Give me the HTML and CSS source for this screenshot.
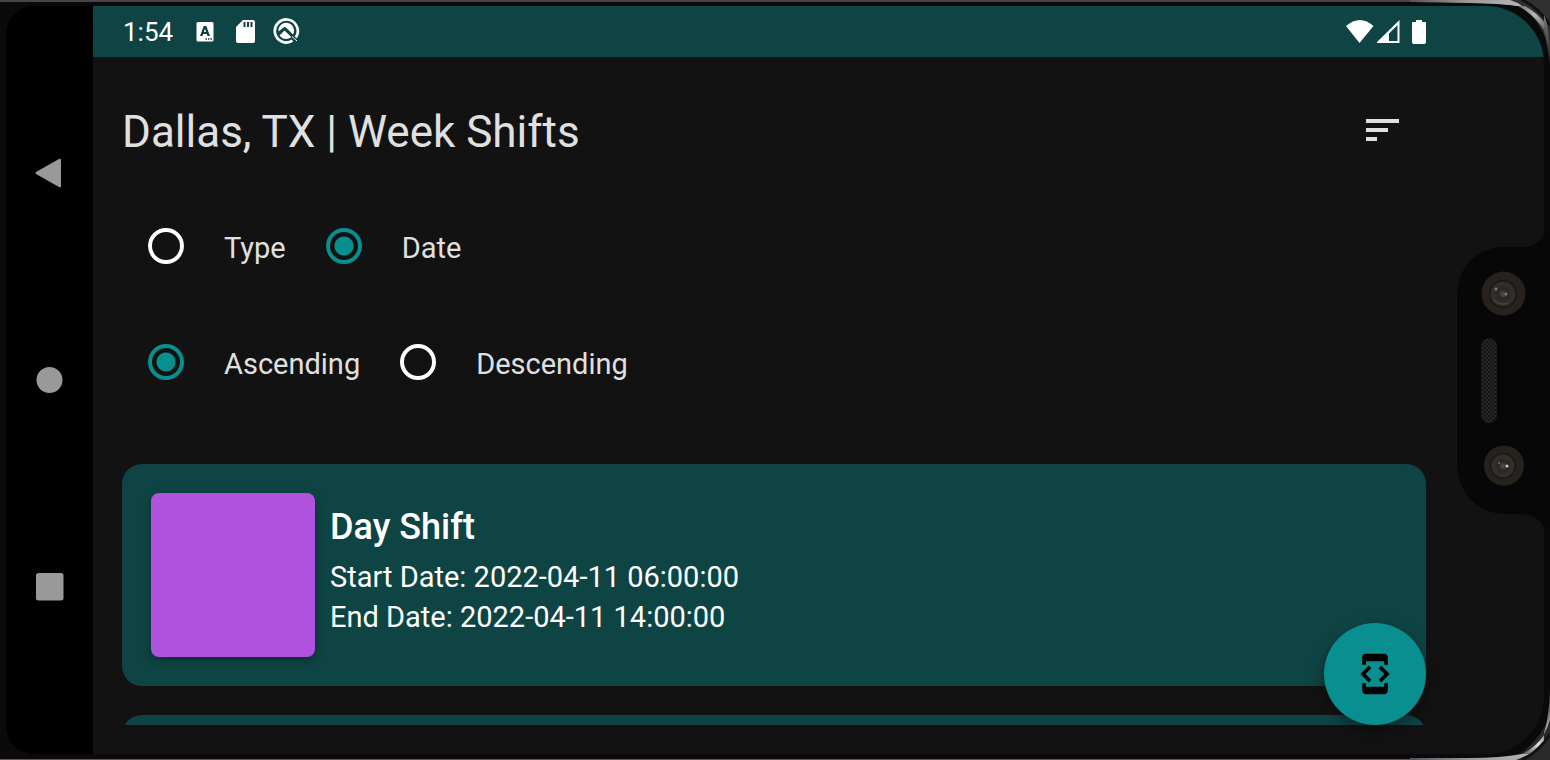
FILE: index.html
```html
<!DOCTYPE html>
<html lang="en">
<head>
<meta charset="utf-8">
<meta name="viewport" content="width=device-width, initial-scale=1">
<title>Dallas, TX | Week Shifts</title>
<link rel="stylesheet" href="styles.css">
</head>
<body>
<div class="phone">
  <svg class="bezel bezel-top" width="140" height="90" viewBox="0 0 140 90" aria-hidden="true">
    <defs>
      <linearGradient id="rim"><stop offset="0" stop-color="#55545a"/><stop offset=".5" stop-color="#999"/><stop offset="1" stop-color="#b5b5b5"/></linearGradient>
      <linearGradient id="shine" x1="0" y1="0" x2="1" y2="1"><stop offset="0" stop-color="#777"/><stop offset=".5" stop-color="#b8b8b8"/><stop offset="1" stop-color="#666"/></linearGradient>
      <linearGradient id="side" x1="0" y1="0" x2="0" y2="1"><stop offset="0" stop-color="#777"/><stop offset="1" stop-color="#222"/></linearGradient>
    </defs>
    <path d="M100 0H140V50Q128 12 100 0Z" fill="#303030"/>
    <path d="M0 0H100Q107 2 112 6H106Q94 3 0 2Z" fill="url(#rim)"/>
    <path d="M108 6H115Q127 13 134 22V30Q124 14 108 6Z" fill="url(#shine)"/>
    <path d="M112 0Q128 7 140 25" fill="none" stroke="#111" stroke-width="3"/>
    <path d="M134 15Q140 27 140 65Q137 42 134 31Z" fill="url(#side)"/>
  </svg>
  <svg class="bezel bezel-bottom" width="140" height="90" viewBox="0 0 140 90" aria-hidden="true">
    <defs>
      <linearGradient id="glint" x1="0" y1="1" x2="1" y2="0"><stop offset="0" stop-color="#555"/><stop offset=".65" stop-color="#ddd"/><stop offset="1" stop-color="#888"/></linearGradient>
      <linearGradient id="flank" x1="0" y1="0" x2="0" y2="1"><stop offset="0" stop-color="#222"/><stop offset="1" stop-color="#bbb"/></linearGradient>
    </defs>
    <path d="M100 90H140V45Q128 76 100 90Z" fill="#2a2a2a"/>
    <path d="M0 88H60Q90 88 112 84H120L106 90H0Z" fill="url(#rim)"/>
    <path d="M112 84Q125 78 134 65V73Q127 81 119 84Z" fill="url(#glint)"/>
    <path d="M134 63Q139 48 140 18V50Q138 57 134 64Z" fill="url(#flank)"/>
    <path d="M112 90Q130 81 140 64" fill="none" stroke="#111" stroke-width="3"/>
  </svg>
  <div class="screen">
    <nav class="navbar" aria-label="System navigation">
      <button class="nav-button" aria-label="Back"><svg width="30" height="32" viewBox="0 0 30 32"><path d="M1 15 24 2Q26 1 26 3V29Q26 31 24 30L1 17Q0 16 1 15Z" fill="#999"/></svg></button>
      <button class="nav-button" aria-label="Home"><svg width="30" height="32" viewBox="0 0 30 32"><circle cx="14.500" cy="16" r="13" fill="#999"/></svg></button>
      <button class="nav-button" aria-label="Recent apps"><svg width="30" height="32" viewBox="0 0 30 32"><rect x="1" y="2" width="27.500" height="27.500" rx="2.500" fill="#999"/></svg></button>
    </nav>
    <div class="app">
      <header class="statusbar">
        <time class="clock">1:54</time>
        <svg class="status-a" width="18" height="20" viewBox="0 0 18 20" aria-hidden="true"><rect x=".5" width="17" height="19.500" rx="1.500" fill="#fff"/><path fill-rule="evenodd" d="M7.700 4H10.300L14 14H11.500L10.800 12H7.200L6.500 14H4ZM9 6.800 7.900 10H10.100Z" fill="#0f4444"/><path d="M9.500 17h1.500m1 0h1.500m1 0h1.500" stroke="#0f4444" stroke-width="1.500"/></svg>
        <svg class="status-sd" width="20" height="24" viewBox="0 0 20 24" aria-hidden="true"><path d="M7 0H17Q19 0 19 2V21Q19 23 17 23H2Q0 23 0 21V7Z" fill="#fff"/><path d="M8.500 2V7M12 2V7M15.500 2V7" stroke="#0f4444" stroke-width="2"/></svg>
        <svg class="status-q" width="28" height="28" viewBox="0 0 28 28" aria-hidden="true"><path d="M19.500 22.700A11.500 11.500 0 1 1 22.800 19.500" fill="none" stroke="#fff" stroke-width="2.700"/><path d="M5.500 13.500A7.800 7.800 0 1 1 20 16.500L13 9.500Q11.800 8.500 10.500 9.500Z" fill="#fff"/><path d="M6.500 17.500 11.500 12.500 18.500 19.300Q11.500 23.500 6.500 17.500Z" fill="#fff"/><path d="M19 18.500 24 23" stroke="#fff" stroke-width="1"/></svg>
        <div class="signals">
          <svg width="28" height="24" viewBox="0 0 28 24" aria-hidden="true"><path d="M0 6Q14-6 27.500 6L13.500 23Z" fill="#fff"/></svg>
          <svg width="24" height="24" viewBox="0 0 24 24" aria-hidden="true"><path fill-rule="evenodd" d="M-1 23 22.500 0V23ZM12 13.500V21H20.500V5Z" fill="#fff"/></svg>
          <svg class="battery" width="14" height="24" viewBox="0 0 14 24" aria-hidden="true"><path d="M4 0H10V2H13Q14 2 14 3V22Q14 24 12 24H2Q0 24 0 22V3Q0 2 1 2H4Z" fill="#fff"/></svg>
        </div>
      </header>
      <main class="content">
        <div class="heading">
          <h1 class="title">Dallas, TX | Week Shifts</h1>
          <button class="sort" aria-label="Sort"><svg width="34" height="24" viewBox="0 0 34 24"><path d="M0 0H33V4H0ZM0 9H22V13H0ZM0 18H11V22H0Z" fill="#e0e0e0"/></svg></button>
        </div>
        <form class="filters">
          <div class="options" role="radiogroup" aria-label="Sort by">
            <label class="option"><input class="radio" type="radio" name="field"><span class="option-text">Type</span></label>
            <label class="option"><input class="radio" type="radio" name="field" checked><span class="option-text">Date</span></label>
          </div>
          <div class="options" role="radiogroup" aria-label="Sort order">
            <label class="option"><input class="radio" type="radio" name="order" checked><span class="option-text">Ascending</span></label>
            <label class="option"><input class="radio" type="radio" name="order"><span class="option-text">Descending</span></label>
          </div>
        </form>
        <section class="shifts" aria-label="Shifts">
          <article class="card">
            <div class="swatch"></div>
            <div class="details">
              <h2 class="shift-name">Day Shift</h2>
              <p class="date">Start Date: 2022-04-11 06:00:00</p>
              <p class="date">End Date: 2022-04-11 14:00:00</p>
            </div>
          </article>
          <article class="card"></article>
        </section>
      </main>
      <button class="fab" aria-label="Developer options"><svg width="44" height="44" viewBox="0 0 24 24"><path d="M7 5h10v2h2V3c0-1.100-.9-1.990-2-1.990L7 1c-1.100 0-2 .9-2 2v4h2V5zm8.410 11.590L20 12l-4.590-4.590L14 8.830 17.170 12 14 15.170l1.410 1.420zM10 15.170L6.830 12 10 8.830 8.590 7.410 4 12l4.590 4.590L10 15.170zM17 19H7v-2H5v4c0 1.100.9 2 2 2h10c1.100 0 2-.9 2-2v-4h-2v2z"/></svg></button>
    </div>
  </div>
  <svg class="notch" width="94" height="294" viewBox="0 0 94 294" aria-hidden="true">
    <defs>
      <radialGradient id="lens"><stop offset="0" stop-color="#57504c"/><stop offset=".35" stop-color="#292624"/><stop offset=".8" stop-color="#343230"/><stop offset="1" stop-color="#11100f"/></radialGradient>
      <pattern id="mesh" width="4" height="4" patternUnits="userSpaceOnUse"><rect width="4" height="4" fill="#141414"/><path d="M0 1h2M2 3h2" stroke="#3a3a3a"/></pattern>
    </defs>
    <path d="M94 0H88Q84 14 64 14H50C18 14 1 36 1 64V230C1 258 20 281 50 281H62Q82 281 88 294H94Z" fill="#070707"/>
    <circle cx="47.500" cy="60.500" r="22" fill="#28221c"/><circle cx="47" cy="61" r="14" fill="url(#lens)"/><circle cx="40" cy="56" r="1.500" fill="#77798a"/><circle cx="50" cy="61" r="1.500" fill="#967466"/><path d="M38 67Q44 73 52 70" stroke="#504c49" fill="none"/>
    <rect x="25.500" y="105.500" width="15" height="84" rx="7" fill="url(#mesh)" stroke="#1c1c1c"/>
    <circle cx="48" cy="232.500" r="20" fill="#28221c"/><circle cx="47" cy="233" r="13" fill="url(#lens)"/><circle cx="51" cy="233" r="1.500" fill="#d4cdc5"/><circle cx="43" cy="230" r="1" fill="#77716c"/>
  </svg>
</div>
</body>
</html>
```
FILE: styles.css
```css
* { box-sizing: border-box; }
body { margin: 0; background: #0a0a0a; font-family: Roboto, "Liberation Sans", sans-serif; color: #e0e0e0; }
h1, h2, p { margin: 0; font-weight: 400; }
button { margin: 0; padding: 0; border: 0; background: none; color: inherit; font: inherit; }
svg { display: block; flex: none; }

.phone { position: relative; height: 100vh; padding: 6px; display: flex; background: #0a0a0a; overflow: hidden; box-shadow: inset 0 2px #45444a, inset 0 -1px #5c5759; }
.screen { position: relative; flex: 1; min-width: 0; display: flex; background: #121212; border-radius: 28px 58px 58px 28px; overflow: hidden; }
.bezel { position: absolute; right: 0; }
.bezel-top { top: 0; }
.bezel-bottom { bottom: 0; }
.notch { position: absolute; right: 0; top: 233px; }

.navbar { width: 87px; background: #000; display: flex; flex-direction: column; align-items: center; justify-content: space-between; padding: 151px 0; }
.app { position: relative; flex: 1; min-width: 0; display: flex; flex-direction: column; padding-bottom: 29px; }

.statusbar { flex: none; height: 51px; background: #0f4444; display: flex; align-items: center; padding: 0 118px 0 30px; }
.clock { font-size: 26px; line-height: 32px; color: #fff; }
.status-a { margin-left: 23px; }
.status-sd { margin-left: 22px; }
.status-q { margin-left: 17px; }
.signals { margin-left: auto; display: flex; gap: 3px; }
.battery { margin-left: 8px; }

.content { flex: 1; min-height: 0; padding: 44px 118px 0 29px; display: flex; flex-direction: column; overflow: hidden; }
.heading { flex: none; display: flex; justify-content: space-between; align-items: center; padding-right: 26px; height: 60px; }
.title { font-size: 44px; line-height: 60px; padding-top: 2px; }
.filters { flex: none; padding: 27px 0 0 26px; }
.options { display: flex; gap: 40px; height: 116px; align-items: center; }
.option { display: flex; align-items: center; gap: 40px; font-size: 29px; line-height: 36px; }
.option-text { padding-top: 3px; }
.radio { appearance: none; margin: 0; width: 36px; height: 36px; border: 4px solid #fff; border-radius: 50%; background: transparent; }
.radio:checked { border-color: #098f8f; background: radial-gradient(circle, #098f8f 9px, transparent 10px); }

.shifts { display: flex; flex-direction: column; gap: 29px; margin-top: 44px; }
.card { flex: none; min-height: 222px; border-radius: 20px; background: #0f4444; padding: 29px; display: flex; gap: 15px; color: #fff; }
.swatch { flex: none; width: 164px; height: 164px; border-radius: 8px; background: #af52de; box-shadow: 0 3px 8px #0005; }
.details { padding-top: 10px; }
.shift-name { font-size: 36px; line-height: 48px; font-weight: 500; margin-bottom: 6px; }
.date { font-size: 29px; line-height: 40px; }
.fab { position: absolute; right: 118px; bottom: 29px; width: 102px; height: 102px; border-radius: 50%; background: #098f8f; color: #000; display: grid; place-items: center; box-shadow: 0 5px 14px #0006; }
```
